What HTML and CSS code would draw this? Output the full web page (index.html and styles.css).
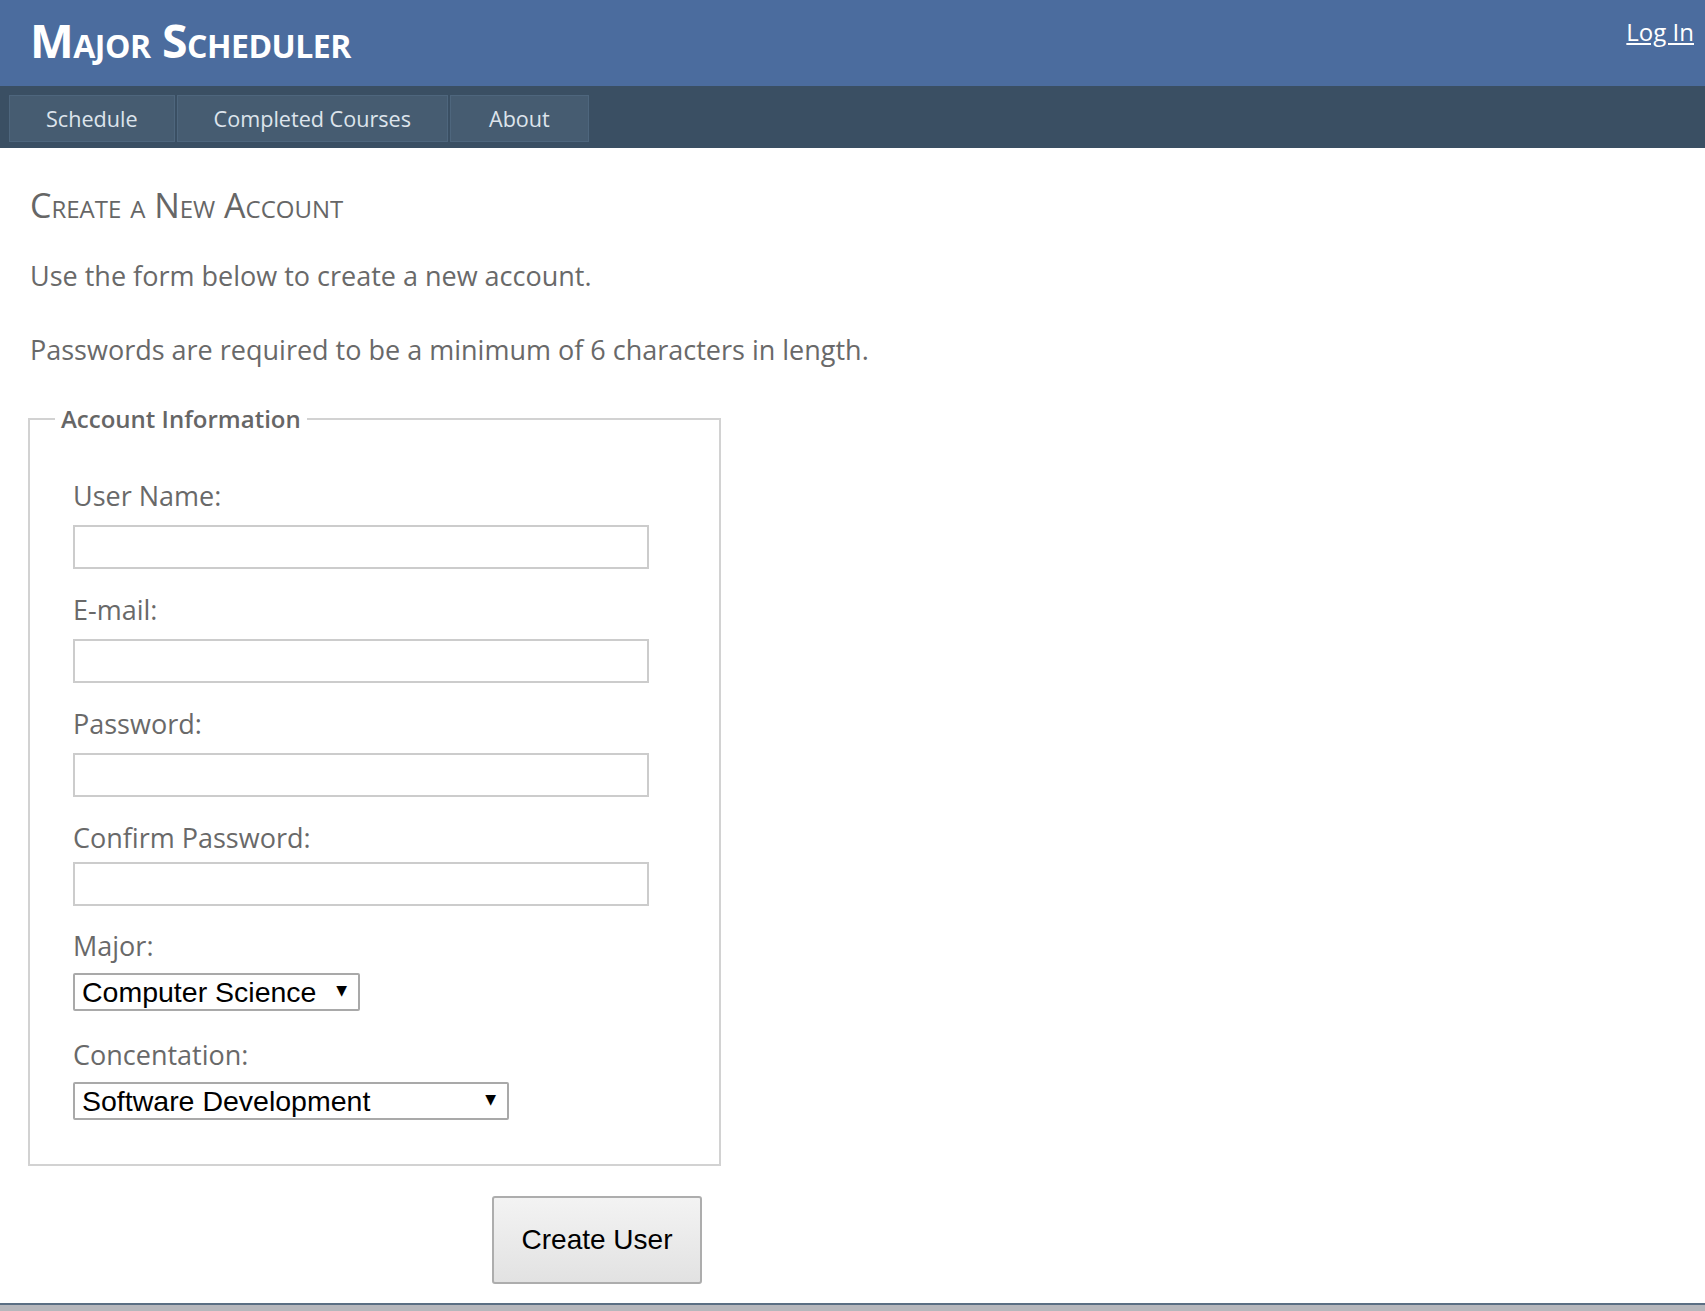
FILE: index.html
```html
<!DOCTYPE html>
<html>
<head>
<meta charset="utf-8">
<title>Major Scheduler</title>
<link rel="stylesheet" href="styles.css">
</head>
<body>
<div class="page">
  <header class="header">
    <h1 class="title">Major Scheduler</h1>
    <a class="login" href="#">Log In</a>
  </header>
  <nav class="menu">
    <a class="menu-item" href="#">Schedule</a>
    <a class="menu-item" href="#">Completed Courses</a>
    <a class="menu-item wide" href="#">About</a>
  </nav>
  <main class="main">
    <h2 class="heading">Create a New Account</h2>
    <p class="intro">Use the form below to create a new account.</p>
    <p class="intro second">Passwords are required to be a minimum of 6 characters in length.</p>
    <div class="account-info">
      <fieldset class="register">
        <legend class="legend">Account Information</legend>
        <div class="field first">
          <label class="label">User Name:</label>
          <input class="textbox" type="text">
        </div>
        <div class="field">
          <label class="label">E-mail:</label>
          <input class="textbox" type="text">
        </div>
        <div class="field">
          <label class="label">Password:</label>
          <input class="textbox" type="password">
        </div>
        <div class="field tight">
          <label class="label">Confirm Password:</label>
          <input class="textbox" type="password">
        </div>
        <div class="field select-field">
          <label class="label">Major:</label>
          <span class="select-wrap">
            <select class="select major"><option>Computer Science</option></select>
          </span>
        </div>
        <div class="field select-field last">
          <label class="label">Concentation:</label>
          <span class="select-wrap">
            <select class="select concentration"><option>Software Development</option></select>
          </span>
        </div>
      </fieldset>
      <div class="submit-row">
        <button class="submit" type="button">Create User</button>
      </div>
    </div>
  </main>
</div>
</body>
</html>
```

FILE: styles.css
```css
html, body {
  margin: 0;
  padding: 0;
}

body {
  background: #b6b7bc;
  font-family: "Open Sans", "Segoe UI", "Liberation Sans", sans-serif;
  color: #696969;
  min-height: 1311px;
}

.page {
  background: #ffffff;
  border-bottom: 2px solid #5b6f84;
}

.header {
  background: #4b6c9e;
  height: 86px;
  display: flex;
  justify-content: space-between;
  align-items: flex-start;
  box-sizing: border-box;
}

.title {
  margin: 0;
  padding: 12px 0 0 30px;
  font-size: 46.4px;
  line-height: 56px;
  font-weight: 700;
  font-variant: small-caps;
  color: #ffffff;
  letter-spacing: -0.5px;
}

.login {
  margin: 16px 11px 0 0;
  color: #ffffff;
  font-size: 24px;
  line-height: 32px;
  text-decoration: underline;
}

.menu {
  background: #3a4f63;
  height: 62px;
  box-sizing: border-box;
  padding: 9px 0 0 9px;
  display: flex;
  gap: 2px;
  align-items: flex-start;
}

.menu-item {
  background: #465c71;
  border: 1px solid #4e667d;
  color: #dde4ec;
  text-decoration: none;
  font-size: 21.6px;
  height: 47px;
  line-height: 42px;
  padding: 2px 36px 0 36px;
  box-sizing: border-box;
}

.menu-item.wide {
  padding: 2px 38px 0 38px;
}

.main {
  padding: 0 0 19px 30px;
}

.heading {
  margin: 0;
  padding-top: 37px;
  font-size: 34px;
  line-height: 40px;
  font-weight: 400;
  font-variant: small-caps;
  color: #666666;
}

.intro {
  margin: 35px 0 0 0;
  font-size: 27px;
  line-height: 32px;
}

.intro.second {
  margin-top: 42px;
}

.account-info {
  width: 691px;
}

.register {
  margin: 38px 0 0 -2px;
  border: 2px solid #d2d2d2;
  padding: 14px 0 44px 43px;
  display: flex;
  flex-direction: column;
}

.legend {
  font-size: 24px;
  line-height: 30px;
  font-weight: 600;
  color: #666666;
  padding: 0 6px;
  margin-left: -18px;
}

.field {
  display: flex;
  flex-direction: column;
  align-items: flex-start;
  margin-top: 25px;
}

.field.first {
  margin-top: 32px;
}

.label {
  font-size: 27px;
  line-height: 32px;
  margin-bottom: 13px;
}

.field.tight .label {
  margin-bottom: 8px;
}

.textbox {
  width: 576px;
  height: 44px;
  box-sizing: border-box;
  border: 2px solid #cccccc;
  margin: 0;
  padding: 0 6px;
  font-size: 22px;
}

.select-field {
  margin-top: 24px;
}

.select-field.last {
  margin-top: 28px;
}

.select-field .label {
  margin-bottom: 11px;
}

.select-wrap {
  position: relative;
  display: inline-block;
}

.select-wrap::after {
  content: "\25BC";
  position: absolute;
  right: 13px;
  top: 9px;
  font-size: 14px;
  color: #000000;
  font-family: "DejaVu Sans", sans-serif;
  pointer-events: none;
}

.select {
  -webkit-appearance: none;
  appearance: none;
  height: 38px;
  box-sizing: border-box;
  border: 2px solid #a9a9a9;
  border-radius: 2px;
  background: #ffffff;
  color: #000000;
  font-family: "Liberation Sans", Arial, sans-serif;
  font-size: 28.5px;
  line-height: 32px;
  padding: 0 0 0 7px;
  margin: 0;
}

.select.major {
  width: 287px;
}

.select.concentration {
  width: 436px;
}

.submit-row {
  display: flex;
  justify-content: flex-end;
  padding: 30px 19px 0 0;
}

.submit {
  width: 210px;
  height: 88px;
  border: 2px solid #adadad;
  border-radius: 3px;
  background: linear-gradient(#f3f3f3, #e2e2e2);
  font-family: "Liberation Sans", Arial, sans-serif;
  font-size: 28px;
  color: #000000;
  padding: 0;
}
```
